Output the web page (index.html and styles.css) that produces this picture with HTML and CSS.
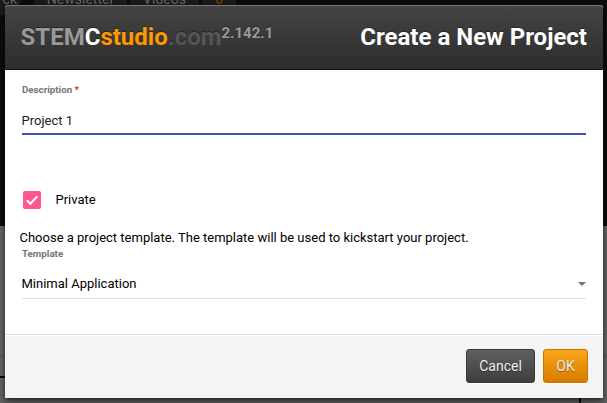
FILE: index.html
```html
<!DOCTYPE html>
<html lang="en">
<head>
<meta charset="utf-8">
<title>STEMCstudio</title>
<link rel="stylesheet" href="styles.css">
</head>
<body>
<div class="page">
  <div class="hero">
    <nav class="nav"><span class="tab tab-first">ck</span><span class="tab tab-news">Newsletter</span><span class="tab tab-videos">Videos</span><span class="tab tab-count">6</span></nav>
  </div>
  <div class="below"><div class="rule"></div><div class="panel"></div></div>
</div>
<div class="modal">
  <header class="header">
    <div class="brand"><span>STEM</span><span class="c">C</span><span class="studio">studio</span><span class="dot">.com</span><span class="version">2.142.1</span></div>
    <h1 class="title">Create a New Project</h1>
  </header>
  <main class="body">
    <label class="label">Description <span class="star">*</span></label>
    <div class="field">Project 1</div>
    <div class="check-row">
      <span class="check"><svg viewBox="0 0 18 18" width="18" height="18"><path d="M3.8 9.3 7.3 12.8 14.4 5.3" fill="none" stroke="#fff" stroke-width="2"/></svg></span>
      <span>Private</span>
    </div>
    <p class="hint">Choose a project template. The template will be used to kickstart your project.</p>
    <label class="label label-template">Template</label>
    <div class="select"><span>Minimal Application</span><span class="arrow"></span></div>
  </main>
  <footer class="footer">
    <button class="btn cancel">Cancel</button>
    <button class="btn ok">OK</button>
  </footer>
</div>
</body>
</html>
```
FILE: styles.css
```css
* { box-sizing: border-box; }
body {
  margin: 0;
  width: 607px;
  height: 403px;
  overflow: hidden;
  font-family: Roboto, sans-serif;
  font-size: 13px;
  color: #111;
}
.page { position: absolute; inset: 0; background: #666; overflow: hidden; }
.hero { height: 226px; background: #0c0c0c; overflow: hidden; }
.nav { display: flex; gap: 3px; margin-top: -11px; height: 26px; }
.tab { background: #1b1b1b; color: #666; font-size: 14px; line-height: 21px; text-align: center; white-space: nowrap; }
.tab-first { width: 20px; padding-right: 3px; text-align: right; }
.tab-news { width: 93px; margin-left: 11px; }
.tab-videos { width: 69px; }
.tab-count { width: 34px; color: #7a4a00; }
.below { height: 177px; padding-top: 129px; }
.rule { height: 1px; background: #555; }
.panel { margin-top: 20px; width: 581px; height: 40px; border: 2px solid #080808; border-left: 0; }
.modal {
  position: relative;
  display: flex;
  flex-direction: column;
  margin: 5px 0 0 5px;
  width: 598px;
  height: 393px;
  background: #fff;
  border-radius: 3px 3px 0 0;
  box-shadow: 0 3px 7px rgba(0, 0, 0, .7);
}
.header {
  display: flex;
  justify-content: space-between;
  height: 65px;
  padding: 16px 16px 0 15.5px;
  background: linear-gradient(#444, #2d2d2d);
  border-bottom: 1px solid #121212;
  border-radius: 3px 3px 0 0;
  box-shadow: inset 0 1px 0 #777;
  font-size: 24px;
  font-weight: 700;
  line-height: 32px;
  text-shadow: 0 -1px 0 rgba(0, 0, 0, .35);
  white-space: nowrap;
}
.brand { display: flex; color: #999; }
.c { color: #fff; }
.studio { color: #ff9900; }
.dot { color: #555; }
.version { font-size: 15px; line-height: 25px; }
.title { margin: 0; font-size: 24px; line-height: 32px; color: #fff; }
.body { height: 264px; padding: 14px 17px 0; }
.label { display: block; height: 12px; font-size: 9.75px; line-height: 12px; font-weight: 700; color: #757575; }
.star { color: #dd2c00; }
.field { height: 34px; margin-top: 5px; padding-top: 12px; line-height: 16px; color: #212121; border-bottom: 2px solid #3f51b5; text-indent: -.5px; }
.check-row { display: flex; gap: 14.5px; margin-top: 56px; padding-left: 1px; height: 18px; line-height: 18px; color: #000; }
.check { width: 18px; height: 18px; background: #ff5590; border-radius: 2px; }
.check svg { display: block; }
.hint { margin: 20px 0 0 -2.5px; line-height: 18px; color: #000; }
.label-template { margin-top: 1px; }
.select { display: flex; align-items: center; justify-content: space-between; height: 39px; padding-top: 10px; border-bottom: 1px solid #e0e0e0; line-height: 16px; color: #000; text-indent: -.5px; }
.arrow { border: 4px solid transparent; border-top-color: #757575; border-bottom: 0; }
.footer {
  display: flex;
  justify-content: flex-end;
  gap: 8px;
  height: 64px;
  padding: 14px 15px 0;
  background: #f4f4f4;
  border-top: 1px solid #ddd;
  box-shadow: inset 0 1px 0 #fff;
}
.btn {
  height: 34px;
  padding: 0;
  border: 1px solid #3a3a3a;
  border-radius: 3px;
  color: #eee;
  font: 14px/20px Roboto, sans-serif;
  text-shadow: 0 1px 1px rgba(0, 0, 0, .4);
  box-shadow: 0 1px 0 #fff;
}
.cancel { width: 69px; background: linear-gradient(#606060, #3e3e3e); }
.ok { width: 45px; border-color: #c67700; background: linear-gradient(#faa51a, #d67c00); }
```
